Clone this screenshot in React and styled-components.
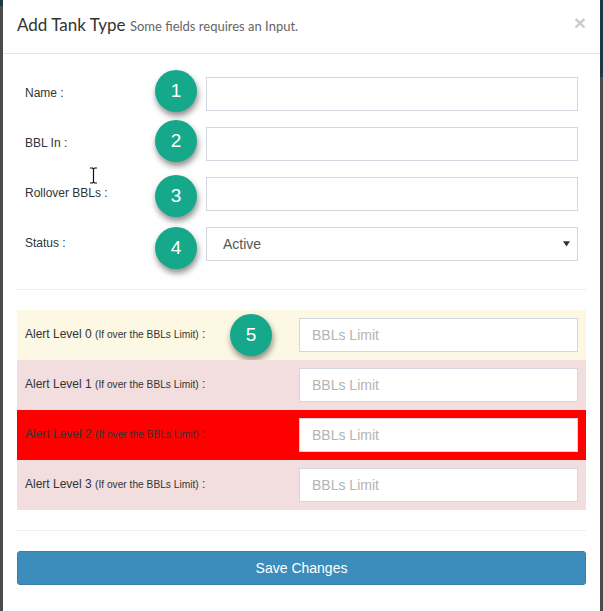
import styled, { createGlobalStyle } from "styled-components";

const GlobalStyle = createGlobalStyle`
  html, body {
    margin: 0;
    padding: 0;
  }
  body {
    background:
      linear-gradient(#1e3944, #1e3944) right top / 3px 77px no-repeat,
      linear-gradient(#1e3944, #1e3944) left top / 3px 6px no-repeat,
      #4b4b4b;
    min-height: 611px;
  }
`;

const fields = [
  { label: "Name :", badge: 1, shift: -3 },
  { label: "BBL In :", badge: 2, shift: -3 },
  { label: "Rollover BBLs :", badge: 3, shift: 2 },
];

const alerts = [
  { level: 0, bg: "#fcf8e3" },
  { level: 1, bg: "#f2dede" },
  { level: 2, bg: "#ff0000" },
  { level: 3, bg: "#f2dede" },
];

const App = () => {
  return (
    <>
      <GlobalStyle />
      <Modal>
        <Header>
          <Title>
            Add Tank Type <small>Some fields requires an Input.</small>
          </Title>
          <Close>×</Close>
        </Header>
        <Body>
          {fields.map((f) => (
            <FormRow key={f.label}>
              <Label>{f.label}</Label>
              <Input type="text" />
              <Badge $left={138} $shift={f.shift}>
                {f.badge}
              </Badge>
            </FormRow>
          ))}
          <FormRow>
            <Label>Status :</Label>
            <SelectWrap>
              <Select defaultValue="Active">
                <option>Active</option>
                <option>Inactive</option>
              </Select>
              <Caret viewBox="0 0 8 8">
                <path d="M0 1.5h8L4 7.5z" fill="#333" />
              </Caret>
            </SelectWrap>
            <Badge $left={138} $shift={4}>
              4
            </Badge>
          </FormRow>

          <Divider $top={28} />

          {alerts.map((a) => (
            <AlertRow key={a.level} $bg={a.bg}>
              <Label>
                Alert Level {a.level} <small>(If over the BBLs Limit)</small> :
              </Label>
              <Input type="text" placeholder="BBLs Limit" />
              {a.level === 0 && (
                <Badge $left={213} $shift={0}>
                  5
                </Badge>
              )}
            </AlertRow>
          ))}

          <Divider $top={20} />

          <SaveButton>Save Changes</SaveButton>
        </Body>
        <Cursor viewBox="0 0 9 17">
          <path
            d="M1 1h2.5l1 1 1-1H8M4.5 2v13M1 16h2.5l1-1 1 1H8"
            stroke="#111"
            strokeWidth="1.2"
            fill="none"
          />
        </Cursor>
      </Modal>
    </>
  );
};

const Modal = styled.div`
  position: relative;
  margin: 0 3px;
  height: 611px;
  background: #fff;
  font-family: "Liberation Sans", Arial, sans-serif;
  color: #333;
`;

const Header = styled.div`
  display: flex;
  justify-content: space-between;
  align-items: flex-start;
  padding: 12px 14px 14px 14px;
  border-bottom: 1px solid #e5e5e5;
`;

const Title = styled.h4`
  margin: 0;
  font-family: Lato, "Open Sans", sans-serif;
  font-weight: 400;
  font-size: 17px;
  line-height: 26px;
  color: #333;

  small {
    font-size: 13px;
    color: #666;
  }
`;

const Close = styled.span`
  font-family: "Liberation Sans", Arial, sans-serif;
  font-size: 21px;
  font-weight: 700;
  line-height: 1;
  color: #000;
  opacity: 0.2;
`;

const Body = styled.div`
  padding: 23px 14px 0 14px;
`;

const FormRow = styled.div`
  position: relative;
  display: grid;
  grid-template-columns: 181px 1fr;
  align-items: center;
  padding: 0 8px;
  margin-bottom: 16px;

  &:last-of-type {
    margin-bottom: 0;
  }
`;

const AlertRow = styled.div`
  position: relative;
  display: grid;
  grid-template-columns: 274px 1fr;
  align-items: center;
  padding: 8px 8px;
  background: ${(p) => p.$bg};
`;

const Label = styled.label`
  font-size: 12px;
  color: #333;
  margin-top: -2px;

  small {
    font-size: 10.2px;
  }
`;

const Input = styled.input`
  box-sizing: border-box;
  width: 100%;
  height: 34px;
  padding: 6px 12px;
  border: 1px solid #d2d6de;
  border-radius: 0;
  background: #fff;
  font-family: "Liberation Sans", Arial, sans-serif;
  font-size: 14px;
  color: #555;
  outline: none;

  &::placeholder {
    color: #b4b4b4;
  }
`;

const SelectWrap = styled.div`
  position: relative;
`;

const Select = styled.select`
  box-sizing: border-box;
  width: 100%;
  height: 34px;
  padding: 6px 12px 6px 16px;
  border: 1px solid #d2d6de;
  border-radius: 0;
  background: #fff;
  font-family: "Liberation Sans", Arial, sans-serif;
  font-size: 14px;
  color: #555;
  appearance: none;
  outline: none;
`;

const Caret = styled.svg`
  position: absolute;
  right: 8px;
  top: 13px;
  width: 7px;
  height: 7px;
  pointer-events: none;
`;

const Badge = styled.div`
  position: absolute;
  left: ${(p) => p.$left}px;
  top: 50%;
  width: 42px;
  height: 42px;
  margin-top: ${(p) => -21 + p.$shift}px;
  border-radius: 50%;
  background: #15a88a;
  box-shadow: 1px 4px 6px rgba(0, 0, 0, 0.45);
  color: #fff;
  font-family: "Liberation Sans", Arial, sans-serif;
  font-size: 19px;
  display: flex;
  align-items: center;
  justify-content: center;
`;

const Divider = styled.hr`
  margin: ${(p) => p.$top}px 0 20px 0;
  border: 0;
  border-top: 1px solid #eee;
`;

const SaveButton = styled.button`
  display: block;
  width: 100%;
  height: 34px;
  border: 1px solid #367fa9;
  border-radius: 3px;
  background: #3c8dbc;
  color: #fff;
  font-family: "Liberation Sans", Arial, sans-serif;
  font-size: 14px;
  cursor: pointer;
`;

const Cursor = styled.svg`
  position: absolute;
  left: 86px;
  top: 167px;
  width: 9px;
  height: 17px;
`;

export default App;
